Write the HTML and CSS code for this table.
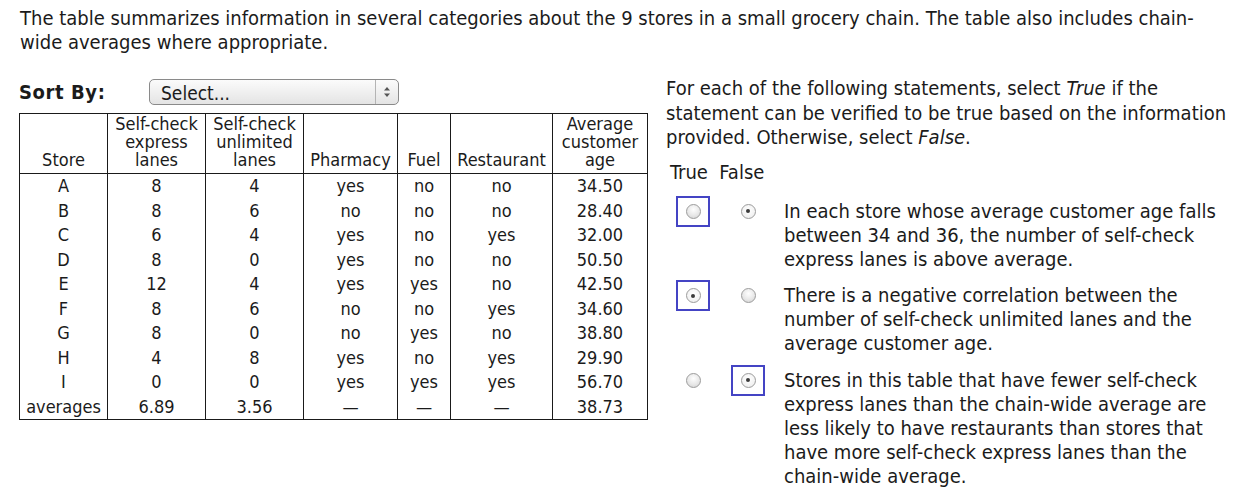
FILE: index.html
```html
<!DOCTYPE html>
<html lang="en">
<head>
<meta charset="utf-8">
<title>Grocery chain table</title>
<link rel="stylesheet" href="styles.css">
</head>
<body>
<div class="page">
  <p class="lead">The table summarizes information in several categories about the 9 stores in a small grocery chain. The table also includes chain-wide averages where appropriate.</p>
  <div class="main">
    <div class="left">
      <div class="sort">
        <span class="sort-label">Sort By:</span>
        <div class="select">
          <span class="sel-text">Select...</span>
          <span class="sel-arrows">
            <svg width="8" height="12" viewBox="0 0 8 12"><path d="M4 1 L7 4.5 L1 4.5 Z" fill="#555"/><path d="M4 11 L7 7.5 L1 7.5 Z" fill="#555"/></svg>
          </span>
        </div>
      </div>
      <table class="data">
        <colgroup>
          <col class="c-store"><col class="c-exp"><col class="c-unl"><col class="c-ph"><col class="c-fuel"><col class="c-rest"><col class="c-age">
        </colgroup>
        <thead>
          <tr>
            <th>Store</th>
            <th>Self-check<br>express<br>lanes</th>
            <th>Self-check<br>unlimited<br>lanes</th>
            <th>Pharmacy</th>
            <th>Fuel</th>
            <th>Restaurant</th>
            <th>Average<br>customer<br>age</th>
          </tr>
        </thead>
        <tbody>
          <tr><td>A</td><td>8</td><td>4</td><td>yes</td><td>no</td><td>no</td><td>34.50</td></tr>
          <tr><td>B</td><td>8</td><td>6</td><td>no</td><td>no</td><td>no</td><td>28.40</td></tr>
          <tr><td>C</td><td>6</td><td>4</td><td>yes</td><td>no</td><td>yes</td><td>32.00</td></tr>
          <tr><td>D</td><td>8</td><td>0</td><td>yes</td><td>no</td><td>no</td><td>50.50</td></tr>
          <tr><td>E</td><td>12</td><td>4</td><td>yes</td><td>yes</td><td>no</td><td>42.50</td></tr>
          <tr><td>F</td><td>8</td><td>6</td><td>no</td><td>no</td><td>yes</td><td>34.60</td></tr>
          <tr><td>G</td><td>8</td><td>0</td><td>no</td><td>yes</td><td>no</td><td>38.80</td></tr>
          <tr><td>H</td><td>4</td><td>8</td><td>yes</td><td>no</td><td>yes</td><td>29.90</td></tr>
          <tr><td>I</td><td>0</td><td>0</td><td>yes</td><td>yes</td><td>yes</td><td>56.70</td></tr>
          <tr><td>averages</td><td>6.89</td><td>3.56</td><td>—</td><td>—</td><td>—</td><td>38.73</td></tr>
        </tbody>
      </table>
    </div>
    <div class="right">
      <p class="intro">For each of the following statements, select <i>True</i> if the statement can be verified to be true based on the information provided. Otherwise, select <i>False</i>.</p>
      <div class="tf-head">True&nbsp; False</div>
      <div class="q">
        <div class="rc"><span class="box focus"><span class="radio"></span></span></div>
        <div class="rc"><span class="box"><span class="radio on"></span></span></div>
        <p class="qt">In each store whose average customer age falls between 34 and 36, the number of self-check express lanes is above average.</p>
      </div>
      <div class="q">
        <div class="rc"><span class="box focus"><span class="radio on"></span></span></div>
        <div class="rc"><span class="box"><span class="radio"></span></span></div>
        <p class="qt">There is a negative correlation between the number of self-check unlimited lanes and the average customer age.</p>
      </div>
      <div class="q">
        <div class="rc"><span class="box"><span class="radio"></span></span></div>
        <div class="rc"><span class="box focus"><span class="radio on"></span></span></div>
        <p class="qt">Stores in this table that have fewer self-check express lanes than the chain-wide average are less likely to have restaurants than stores that have more self-check express lanes than the chain-wide average.</p>
      </div>
    </div>
  </div>
</div>
</body>
</html>
```

FILE: styles.css
```css
html, body {
  margin: 0;
  padding: 0;
  background: #ffffff;
}

body {
  font-family: "DejaVu Sans Condensed", "DejaVu Sans", sans-serif;
  font-size: 20px;
  color: #1b1b1b;
}

.page {
  padding: 6px 10px 0 19px;
}

.lead {
  margin: 0;
  line-height: 24px;
  padding-left: 1px;
  padding-right: 14px;
}

.main {
  display: flex;
  margin-top: 22px;
  gap: 19px;
}

.left {
  width: 628px;
  flex: none;
}

.sort {
  display: flex;
  align-items: center;
  margin-top: 3px;
  height: 26px;
}

.sort-label {
  font-weight: bold;
  width: 130px;
  font-size: 20px;
  letter-spacing: 0.6px;
}

.select {
  display: flex;
  align-items: stretch;
  width: 250px;
  height: 26px;
  box-sizing: border-box;
  border: 1px solid #8a8a8a;
  border-radius: 5px;
  background: linear-gradient(#fbfbfb, #e4e4e4);
}

.sel-text {
  flex: 1;
  padding-left: 11px;
  line-height: 26px;
  font-size: 19px;
}

.sel-arrows {
  width: 22px;
  border-left: 1px solid #b4b4b4;
  display: flex;
  align-items: center;
  justify-content: center;
}

.data {
  margin-top: 8px;
  width: 628px;
  border-collapse: collapse;
  table-layout: fixed;
  border: 1px solid #1a1a1a;
  font-size: 18px;
}

.c-store { width: 88px; }
.c-exp { width: 98px; }
.c-unl { width: 98px; }
.c-ph { width: 94px; }
.c-fuel { width: 53px; }
.c-rest { width: 102px; }
.c-age { width: 95px; }

.data th {
  font-weight: normal;
  vertical-align: bottom;
  line-height: 18px;
  padding: 1px 0 4px;
  border-left: 1px solid #1a1a1a;
  border-bottom: 1px solid #1a1a1a;
  text-align: center;
}

.data td {
  padding: 0;
  height: 24.5px;
  line-height: 24.5px;
  text-align: center;
  border-left: 1px solid #1a1a1a;
}

.right {
  flex: 1;
  min-width: 0;
}

.intro {
  margin: 0;
  line-height: 24.5px;
}

.tf-head {
  margin-top: 10px;
  line-height: 24px;
  padding-left: 4px;
}

.q {
  display: grid;
  grid-template-columns: 54px 56px 1fr;
  align-items: start;
  margin-top: 12px;
}

.q + .q {
  margin-top: 9.5px;
}

.rc {
  display: flex;
  justify-content: center;
}

.box {
  width: 34px;
  height: 31px;
  box-sizing: border-box;
  display: flex;
  align-items: center;
  justify-content: center;
  border: 2px solid transparent;
}

.box.focus {
  border-color: #4444c4;
}

.radio {
  width: 15px;
  height: 15px;
  box-sizing: border-box;
  border-radius: 50%;
  border: 1px solid #9c9c9c;
  background: radial-gradient(circle at 50% 35%, #fefefe 0%, #e8e8e8 55%, #cfcfcf 100%);
  position: relative;
}

.radio.on {
  background: radial-gradient(circle at 50% 40%, #ffffff 0%, #f1f1f1 70%, #e0e0e0 100%);
}

.radio.on::after {
  content: "";
  position: absolute;
  left: 50%;
  top: 50%;
  width: 4px;
  height: 4px;
  margin: -2px 0 0 -2px;
  border-radius: 50%;
  background: #3a3a3a;
}

.qt {
  margin: 0 0 0 8px;
  padding-top: 3px;
  line-height: 24px;
}
```
